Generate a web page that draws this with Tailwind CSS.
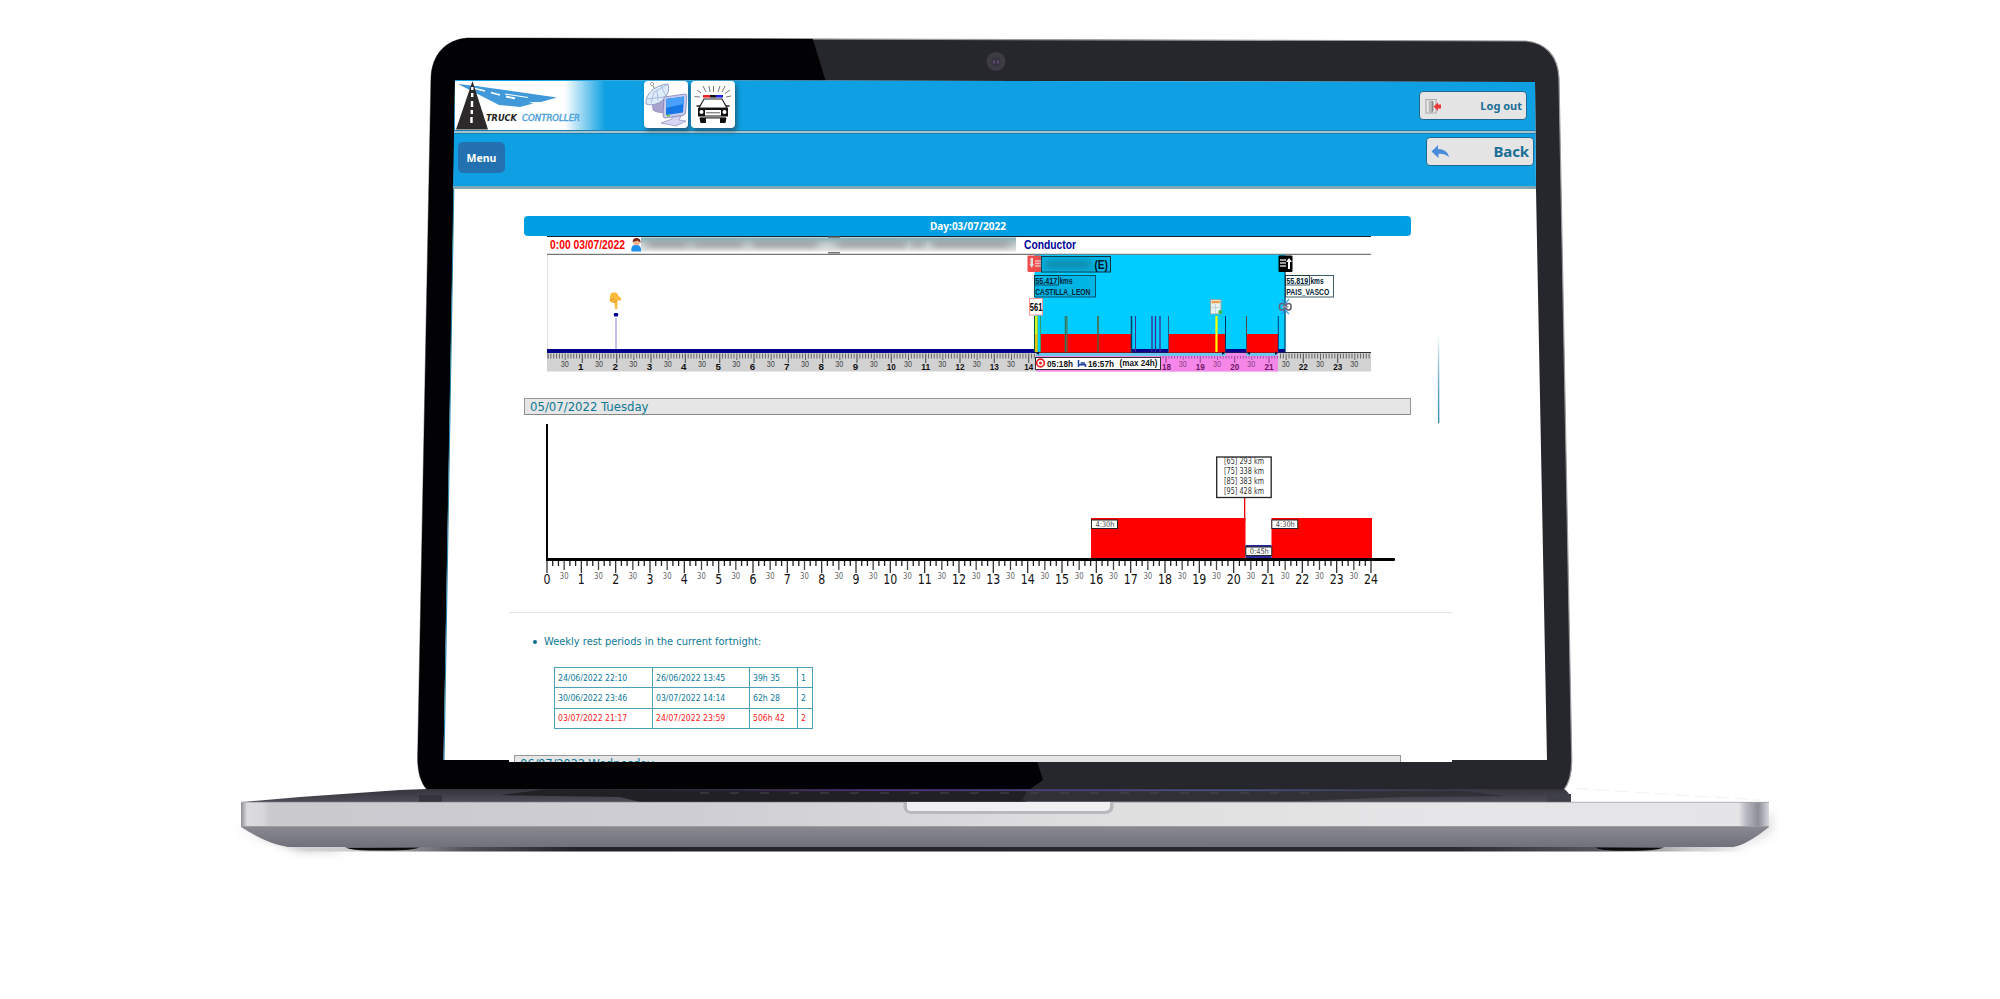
<!DOCTYPE html>
<html lang="en">
<head>
<meta charset="utf-8">
<title>Truck Controller</title>
<script src="https://cdn.jsdelivr.net/npm/@tailwindcss/browser@4"></script>
</head>
<body class="bg-white">
<div class="relative w-[2000px] h-[999px] overflow-hidden bg-white font-['Noto_Sans',sans-serif] text-[#0e7896]">

  <!-- Laptop -->
  <svg class="absolute inset-0" width="2000" height="999" viewBox="0 0 2000 999">
    <defs>
      <linearGradient id="front" x1="0" x2="1"><stop offset="0" stop-color="#8e8e94"/><stop offset=".004" stop-color="#dcdcdf"/><stop offset=".014" stop-color="#d8d8dc"/><stop offset=".019" stop-color="#c9c9ce"/><stop offset=".3" stop-color="#cfced4"/><stop offset=".55" stop-color="#dededf"/><stop offset=".8" stop-color="#e6e6e8"/><stop offset=".98" stop-color="#e5e5e8"/><stop offset=".985" stop-color="#b9b9c2"/><stop offset=".993" stop-color="#8d8d98"/><stop offset="1" stop-color="#d8d8de"/></linearGradient>
      <linearGradient id="under" x1="0" x2="0" y1="0" y2="1"><stop offset="0" stop-color="#888890"/><stop offset="1" stop-color="#71717b"/></linearGradient>
      <linearGradient id="deck" x1="0" x2="0" y1="0" y2="1"><stop offset="0" stop-color="#35343c"/><stop offset="1" stop-color="#4e4d58"/></linearGradient>
      <linearGradient id="shadow" x1="0" x2="1"><stop offset="0" stop-color="#888" stop-opacity="0"/><stop offset=".12" stop-color="#55555c"/><stop offset=".2" stop-color="#222228"/><stop offset=".8" stop-color="#2a2a30"/><stop offset=".9" stop-color="#55555c"/><stop offset="1" stop-color="#888" stop-opacity="0"/></linearGradient>
      <linearGradient id="glint" x1="0" x2="1"><stop offset="0" stop-color="#3c2a5c" stop-opacity="0"/><stop offset=".3" stop-color="#4b2f78"/><stop offset=".7" stop-color="#4a5288"/><stop offset="1" stop-color="#4a5288" stop-opacity="0"/></linearGradient>
      <filter id="soft" x="-20%" y="-50%" width="140%" height="200%"><feGaussianBlur stdDeviation="5"/></filter>
      <clipPath id="lidClip"><path d="M431 78C432 55 445 40 467 38L1526 41C1546 43 1558 56 1559 78L1571.700 758C1572 772 1570 782 1564 789.500H427C420 782 417.500 770 417.700 757Z"/></clipPath>
    </defs>
    <path d="M236 828L300 851H350L300 840Z" fill="#777" opacity=".4" filter="url(#soft)"/>
    <path d="M1772 812L1774 824L1770 835L1735 848H1690Z" fill="#777" opacity=".2" filter="url(#soft)"/>
    <path d="M431 78C432 55 445 40 467 38L1526 41C1546 43 1558 56 1559 78L1571.700 758C1572 772 1570 782 1564 789.500H427C420 782 417.500 770 417.700 757Z" fill="#26272c" stroke="#9a9a9e" stroke-width="1.200"/>
    <g clip-path="url(#lidClip)">
      <path d="M400 30H810L826 82L1037 761L1043 780L1026 792H400Z" fill="#020204"/>
    </g>
    <circle cx="996" cy="61.500" r="9.500" fill="#3d3c45"/><circle cx="996" cy="61.500" r="5" fill="#37333f"/><rect x="993" y="60.500" width="2" height="3" fill="#5c4a7d"/><rect x="997" y="60.500" width="2" height="3" fill="#5c4a7d"/>
    <path d="M455 80L1535 82L1536 190L1547 760H1452V762H509V760H443.500L453.700 190Z" fill="#fff"/>
    <!-- Deck -->
    <path d="M243 802L300 797L400 790L427 789H1564Q1571 793 1571 802Z" fill="url(#deck)"/>
    <path d="M500 795L545 789.500H1026V802H640L620 797Z" fill="#202025"/><path d="M1028 789.500H1450L1505 796L1400 797L1300 801H1022Z" fill="#303036"/>
    <rect x="419" y="795" width="23" height="7" fill="#35343c"/><rect x="1547" y="794" width="24" height="8" fill="#3f3f4a"/>
    <rect x="600" y="789.500" width="900" height="1.600" fill="url(#glint)"/>
    <path d="M700 793H1320" stroke="#4a4852" stroke-width="1" stroke-dasharray="9 21"/>
    <path d="M1575 788.500L1760 800" stroke="#f2f2f3" stroke-width="1" stroke-dasharray="14 6"/>
    <rect x="241" y="802" width="1528" height="25" fill="url(#front)"/>
    <path d="M241 827H1769C1755 838 1742 846 1733 847H288C270 844 255 836 241 827Z" fill="url(#under)"/>
    <path d="M241 826.500H1769" stroke="#9b9ba0"/><path d="M241 802.300H1769" stroke="#a3a3a9" stroke-width=".8"/>
    <path d="M903.500 802V807Q904 814 912 814H1105Q1113 814 1113.500 807V802Z" fill="#b9b9bd"/>
    <path d="M907 802V808Q907.500 811 911 811H1103Q1109.500 811 1110 807V802Z" fill="#f0f0f2"/>
    <rect x="285" y="847" width="1460" height="4.500" fill="url(#shadow)"/>
    <path d="M345 847.500H420Q412 850.500 390 850.500H370Q352 850.500 345 847.500ZM1595 847.500H1664Q1655 850.800 1635 850.800H1620Q1602 850.800 1595 847.500Z" fill="#0b0b0e"/>
  </svg>

  <!-- Screen -->
  <main class="relative ml-[443px] mt-[80px] w-[1104px] h-[682px] overflow-hidden [clip-path:polygon(12px_0,1092px_2px,1093px_110px,1104px_680px,1009px_680px,1009px_682px,66px_682px,66px_680px,0_680px,10px_110px)]">

    <header class="flex h-[51px] items-start bg-[#0ea0e2] border-b border-[#1b80ae] pl-[12px] pr-[20px]">
      <svg width="160" height="50" viewBox="455 80 160 50">
        <defs><linearGradient id="fade" x1="0" x2="1"><stop offset="0" stop-color="#fff"/><stop offset=".73" stop-color="#fff"/><stop offset="1" stop-color="#0ea0e2"/></linearGradient></defs>
        <rect x="455" y="81" width="150" height="49" fill="url(#fade)"/>
        <path d="M458 84L476 86L557 97.500L541 102L529 102L533 103.500L520 107L499 105Z" fill="#4199d9"/>
        <path d="M475 88.500L485 91M491 92.500L500 95M506 96.500L515 98.500" stroke="#fff" stroke-width="1.800"/>
        <path d="M505 94L528 97.500" stroke="#fff" stroke-width="1"/>
        <path d="M472.500 81L456 129.500H488Z" fill="#2b2929"/>
        <path d="M472.300 87V90M472.200 93V97M472 101V107M471.800 110V114M471.500 117V123" stroke="#fff" stroke-width="2.400"/>
        <g font-family="'DejaVu Sans',sans-serif" font-size="9" font-weight="700" font-style="oblique"><text x="486" y="120.500" fill="#222" textLength="31" lengthAdjust="spacingAndGlyphs">TRUCK</text><text x="522" y="120.500" fill="#4a9edb" font-weight="400" stroke="#4a9edb" stroke-width=".4" textLength="58" lengthAdjust="spacingAndGlyphs">CONTROLLER</text></g>
      </svg>
      <div class="ml-[29px] mt-px flex gap-[3px]">
        <div class="h-[47px] w-[44px] rounded-[4px] bg-white shadow-[2px_3px_4px_rgba(40,70,90,.7)]">
          <svg width="44" height="47" viewBox="644 81 44 47">
            <circle cx="652" cy="84" r="1.700" fill="none" stroke="#aaa"/><path d="M653 86L657 93" stroke="#777"/>
            <path d="M652 101L653 110Q658 114 669 112L666 98Z" fill="#a9a4cf" stroke="#8c88b5" stroke-width=".7"/>
            <path d="M646 104C645 94 655 85 668 84C669.500 90 668 94 665 98C660 104 652 106 646 104Z" fill="#dfeafa" stroke="#8296c0" stroke-width=".9"/>
            <path d="M651 103L654 92L668 84M658 101L657 91M647 99L664 97M661 86L666 96" fill="none" stroke="#9ab4dc" stroke-width=".8"/>
            <path d="M664 97L685 94Q687 94 686.800 96L685.500 113Q685 115 683 115.500L665 118Q663 118 663 115Z" fill="#c9cbed" stroke="#7779b4" stroke-width=".7"/>
            <path d="M666 99L684 96.500L683 112.500L666 115Z" fill="#1676e6"/><path d="M666 99L684 96.500L683.500 104L666 108Z" fill="#49a0fa"/>
            <path d="M672 117L681 116L679 120L686 121L676 126L661 123L672 119Z" fill="#d6d4f1" stroke="#8e8cc0" stroke-width=".7"/><path d="M667 115.500H670" stroke="#56c531" stroke-width="1.600"/>
          </svg>
        </div>
        <div class="h-[47px] w-[44px] rounded-[4px] bg-white shadow-[2px_3px_4px_rgba(40,70,90,.7)]">
          <svg width="44" height="47" viewBox="691 81 44 47">
            <path d="M697 90L701 93M694.500 96.500L700 97M703 86L706 92M709 86L710 92M720 86L718 92M713.500 86V92M725 86L722 92M730 90L725 93.500M731 96L726 97" stroke="#666" stroke-width=".9"/>
            <rect x="703" y="95" width="7" height="2.600" fill="#e22"/><rect x="710" y="95" width="6" height="2.600" fill="#111"/><rect x="716" y="95" width="7" height="2.600" fill="#22d"/>
            <path d="M704 99H722L727 108H699Z" fill="#fff" stroke="#222" stroke-width="1.200"/>
            <path d="M696.500 106H700M726 106H729.500" stroke="#222" stroke-width="1.500"/>
            <path d="M698 108H728V116.500H698Z" fill="#111"/><path d="M705 110H721V115.500H705Z" fill="#fff"/><path d="M706 112.800H720" stroke="#333" stroke-width=".8"/>
            <circle cx="701.500" cy="112" r="2" fill="#fff"/><circle cx="724.500" cy="112" r="2" fill="#fff"/>
            <path d="M700 117.800H726" stroke="#333" stroke-width="1.200"/><path d="M699.500 118H706V123H700.500ZM720 118H726.500L725.500 123H720Z" fill="#111"/>
          </svg>
        </div>
      </div>
      <button class="ml-auto mt-[11px] flex h-[29px] w-[108px] items-center justify-between rounded-[4px] border border-[#1c6a91] bg-[#e5e5e6] pl-[5px] pr-[4px] pt-px text-[11px] font-bold text-[#1a6f96]">
        <svg width="17" height="17" viewBox="0 0 17 17"><path d="M1 1.500H11V15H1Z" fill="#eee" stroke="#aaa" stroke-width="1.200"/><path d="M3.500 2.500H6.500V14.500H3.500Z" fill="#bbb"/><path d="M6.500 2.500L8.500 3.500V13L6.500 15Z" fill="#888"/><path d="M16 6.500V10.500H13V13L8.500 8.500L13 4.500V6.500Z" fill="#e93a3a"/></svg>
        <span>Log out</span>
      </button>
    </header>

    <div class="h-[2px] bg-[#a3c3d2]"></div>
    <nav class="flex h-[56px] items-start justify-between border-t border-b-[3px] border-t-[#1b80ae] border-b-[#7fa8b8] bg-[#0ea0e2] pl-[15px] pr-[13px]">
      <button class="mt-[8px] h-[31px] w-[47px] rounded-[5px] bg-[#2371b0] text-[10.5px] font-bold leading-[30px] text-white">Menu</button>
      <button class="mt-[3px] flex h-[29px] w-[108px] items-center justify-between rounded-[4px] border border-[#1c6a91] bg-[#e5e5e6] pl-[4px] pr-[4px] text-[15px] font-bold text-[#1a6f96]">
        <svg width="19" height="16" viewBox="0 0 19 16"><path d="M0.500 7.500L7 1V5C13 5 17 8 18 13C14 10 11 9.500 7.500 10V14Z" fill="#4a8bdc"/></svg>
        <span class="tracking-[-0.1px]">Back</span>
      </button>
    </nav>

    <section class="ml-[81px] mt-[27px] w-[887px]">
      <h2 class="h-[20px] rounded-[4px] bg-[#009fe3] pl-px text-center text-[10px] font-bold leading-[21px] text-white">Day:03/07/2022</h2>
      <svg id="c1" class="ml-[23px] block" width="824" height="136" viewBox="547 236 824 136" font-family="'Liberation Sans',sans-serif"></svg>
      <h3 class="mt-[26px] h-[17px] border border-[#999] border-b-[#888] bg-[#e6e6e6] pl-[5px] font-['DejaVu_Sans_Condensed','DejaVu_Sans',sans-serif] text-[13px] leading-[15px]">05/07/2022 Tuesday</h3>
      <svg id="c2" class="ml-[18px] block" width="869" height="180" viewBox="542 415 869 180" font-family="'DejaVu Sans Condensed','DejaVu Sans',sans-serif"></svg>
    </section>

    <hr class="ml-[66px] mt-[17px] w-[943px] border-[#e2e2e2]">
    <section class="ml-[90px] mt-[21px] font-['DejaVu_Sans_Condensed','DejaVu_Sans',sans-serif]">
      <div class="flex h-[16px] items-center gap-[7px] text-[11px] leading-[16px]"><span class="h-[4px] w-[4px] rounded-full bg-[#0e6e8e]"></span><span class="whitespace-nowrap">Weekly rest periods in the current fortnight:</span></div>
      <table class="ml-[21px] mt-[17px] w-[258px] table-fixed border-collapse text-[8.6px] leading-[10px]">
        <colgroup><col class="w-[98px]"><col class="w-[97px]"><col class="w-[48px]"><col class="w-[15px]"></colgroup>
        <tbody class="[&_td]:h-[20.4px] [&_td]:border [&_td]:border-[#4ba0b8] [&_td]:p-0 [&_td]:pl-[3px] [&_td]:whitespace-nowrap">
          <tr><td>24/06/2022 22:10</td><td>26/06/2022 13:45</td><td>39h 35</td><td>1</td></tr>
          <tr><td>30/06/2022 23:46</td><td>03/07/2022 14:14</td><td>62h 28</td><td>2</td></tr>
          <tr class="text-[#ff2020]"><td>03/07/2022 21:17</td><td>24/07/2022 23:59</td><td>506h 42</td><td>2</td></tr>
        </tbody>
      </table>
    </section>
    <h3 class="ml-[71px] mt-[26px] h-[17px] w-[887px] border border-[#999] bg-[#e6e6e6] pl-[5px] font-['DejaVu_Sans_Condensed','DejaVu_Sans',sans-serif] text-[13px] leading-[15px] tracking-[-0.25px]">06/07/2022 Wednesday</h3>

    <svg class="absolute inset-0" width="1104" height="682" viewBox="443 80 1104 682">
      <defs><linearGradient id="edge" x1="0" x2="0" y1="0" y2="1"><stop offset="0" stop-color="#1a7ea8" stop-opacity="0"/><stop offset="1" stop-color="#1a7ea8"/></linearGradient></defs>
      <path d="M1438 335H1439V423H1438.400Z" fill="url(#edge)" stroke="url(#edge)" stroke-width=".6"/>
      <path d="M453.700 190L444 760" stroke="#2f86a8" stroke-width="1.200"/>
    </svg>
  </main>
</div>

<script>
const H = 34.333, X0 = 547;
const rect = (x, y, w, h, f, extra = '') => `<rect x="${x}" y="${y}" width="${w}" height="${h}" fill="${f}" ${extra}/>`;
const line = (x, y1, y2, c, w = 1) => rect(x - w / 2, y1, w, y2 - y1, c);
const text = (x, y, size, str, len, extra = '') => `<text x="${x}" y="${y}" font-size="${size}" ${len ? `textLength="${len}" lengthAdjust="spacingAndGlyphs"` : ''} ${extra}>${str}</text>`;

// Tachograph strip of the day
let a = rect(547, 236, 824, 1, '#123') +
  text(550, 249.300, 13.500, '0:00 03/07/2022', 75, 'fill="#f00" font-weight="700"') +
  '<path d="M631.500 251.500Q630.500 244 636 245Q641.500 244 641 251.500Z" fill="#1e90ee"/><circle cx="636.500" cy="242" r="3.300" fill="#f5b08c"/><path d="M632.500 242Q633 237.500 637 238Q641 238.500 640.500 243L638 240.500Z" fill="#7b2418"/>' +
  '<defs><linearGradient id="bl" x1="0" x2="0" y1="0" y2="1"><stop offset="0" stop-color="#7fb0b8"/><stop offset=".4" stop-color="#bcc6c9"/><stop offset="1" stop-color="#e8e8e8"/></linearGradient><filter id="b3" x="-10%" y="-50%" width="120%" height="200%"><feGaussianBlur stdDeviation="4 2"/></filter></defs>' +
  rect(641, 237.500, 375, 14, 'url(#bl)') +
  [[648, 40], [692, 52], [752, 65], [837, 70], [912, 12], [932, 78]].map(b => rect(b[0], 240.500, b[1], 8, '#777', 'opacity=".4" filter="url(#b3)"')).join('') +
  rect(828, 236.500, 12, 1.500, '#777') + rect(828, 252, 12, 1.500, '#777') +
  text(1024, 249.300, 13.500, 'Conductor', 52, 'fill="#00009b" font-weight="700"') +
  rect(547, 253.800, 824, 1, '#555') + rect(547, 255, .6, 98, '#ccc') + rect(1034.500, 254.800, 251, 98, '#00ccff');
a += rect(547, 353, 824, 18.500, '#d2d2d2') + rect(1036, 353, 242, 18.500, '#f587e8') + rect(1036, 353, 190, 3, '#6cc6ee') + rect(1246, 353, 31, 3, '#6cc6ee') + rect(1034.500, 352, 337, 1, '#333');
for (let i = 0; i < 144 * 2; i++) {
  const x = X0 + 1 + i * H / 12;
  if (x > 1370 || (x > 1035 && x < 1160)) continue;
  const hour = i % 12 === 0, half = i % 12 === 6;
  a += line(x, x > 1160 && x < 1278 ? 356 : 353.500, hour && i ? 363 : half ? 360 : 358.500, x > 1160 && x < 1278 ? '#a050a0' : '#666', hour ? 1.300 : 1);
}
for (let h = 0; h < 24; h++) {
  const p = h >= 18 && h < 22;
  if (h && (h < 15 || h > 17)) a += text(X0 + h * H - (h === 18 ? -1.500 : h > 9 ? -1 : 0.500), 369.500, 9.800, h, h > 9 ? 9 : 0, `text-anchor="middle" font-weight="700" fill="${p ? '#6d1466' : '#111'}"`);
  if (h < 14 || h > 17) a += text(X0 + (h + .5) * H + 0.500, 367.300, 9, '30', 8, `text-anchor="middle" fill="${h >= 18 && h < 21 ? '#8c3f86' : '#444'}"`);
}
a += rect(547, 349, 488, 4, '#00008b') + rect(1131, 349, 37, 3.500, '#00008b') + rect(1225, 349, 22, 3.500, '#00008b') + rect(1278, 349, 7, 3.500, '#00008b');
a += rect(1040, 334, 91.500, 18.500, '#f00') + rect(1168, 334, 57.500, 18.500, '#f00') + rect(1246.500, 334, 31.500, 18.500, '#f00');
[[1034.500, '#063'], [1037.500, '#9c3'], [1040.500, '#396'], [1065.500, '#2a7a60', 1.500], [1067, '#5a6a40'], [1098, '#5a5a30', 1.500], [1131.500, '#003a6a', 1.500], [1135.500, '#4a2a8a'], [1152, '#3a2a8a', 1.300], [1155.500, '#3a2a8a', 1.300], [1160, '#3a2a8a', 1.300], [1168.500, '#357'], [1225.500, '#036'], [1246.500, '#544'], [1278.300, '#003a7a']].forEach(l => a += line(l[0], 316, 352, l[1], l[2] || 1));
a += line(1036, 316, 352, '#ff0', 1.600) + line(1036, 334, 352, '#f80', 1) + line(1216.500, 316, 352, '#ff0', 2.200) + line(1285, 272, 353, '#024', 1);
// Hand marker
a += line(616, 318, 349, '#a8a0e0', 1.300) + rect(613.800, 313, 4.400, 3.600, '#00008b', 'rx="1"') +
  '<path d="M610.500 294Q611 292.500 613 292.500H616Q618 293.500 618.500 296L621.500 298.500L620 301L617.500 300L617.300 308.500Q616.300 310 615 308.500L614.600 303Q610.500 303.500 609.500 300Z" fill="#f9b93a"/><path d="M610 299Q612 301 614 299M614 303Q614.500 300.500 617 300.500" stroke="#d8891c" stroke-width=".7" fill="none"/>';
// Start and end cards
a += rect(1027.500, 255.500, 13.500, 16.500, '#ef4b4b', 'rx="1"') + '<path d="M1029.500 264H1030.500V258H1033V264H1034L1031.700 268Z" fill="#ddd"/><path d="M1035 261H1041M1035 263.500H1041M1035 266H1041" stroke="#ffb5b5" stroke-width="1.500"/>' +
  rect(1041.500, 256.500, 69, 15.500, '#00b4e4', 'stroke="#134"') + rect(1044, 259, 47, 11, '#0893b8', 'filter="url(#b3)"') + text(1094.500, 268.800, 12.500, '(E)', 13.500, 'font-weight="700" fill="#012"');
const place = (x, w, bg, km, name, nl) => rect(x, 275.500, w, 21.500, bg, 'stroke="#134" stroke-width=".8"') + rect(x, 275.500, 24, 9.500, 'none', 'stroke="#134" stroke-width=".8"') + text(x + .8, 284, 9.200, km, 22) + text(x + 25, 284, 9.200, 'kms', 13) + text(x + .8, 295, 9.600, name, nl);
a += '<g font-weight="700" fill="#023">' + place(1034.500, 61, '#00b4e4', '55.417', 'CASTILLA_LEON', 55) + place(1285.500, 48, '#fff', '55.819', 'PAIS_VASCO', 43) + '</g>';
a += rect(1029.500, 298.500, 13, 16.500, '#fff', 'stroke="#f99"') + text(1029.800, 311, 11.500, '561', 12.500, 'font-weight="700"');
a += rect(1278.500, 255.500, 14, 16.500, '#000', 'rx="1"') + '<path d="M1280 260H1286M1280 263H1286M1280 266H1286" stroke="#ccc" stroke-width="1.300"/><path d="M1289 258L1292 262H1290V269H1288V262H1286Z" fill="#fff"/>';
a += rect(1210.500, 299.500, 10.500, 14.500, '#e6f1f3', 'stroke="#8aa"') + rect(1211.500, 300.800, 8.500, 2.400, '#f3a24a') + '<path d="M1211 307.500H1221M1215.500 304V314" stroke="#b5c8cc" stroke-width=".7"/><circle cx="1220.300" cy="312" r="2" fill="#41b648"/>';
a += '<path d="M1281.500 299L1284 303M1289 299L1286 303M1281.500 314L1284 311M1289 314L1286 311M1285 303V311" stroke="#2a9cf0" stroke-width="1.200"/><g fill="none" stroke="#667" stroke-width="1.700"><rect x="1279.500" y="303.500" width="5" height="6.500" rx="2.500"/><rect x="1286" y="303.500" width="5" height="6.500" rx="2.500"/></g><path d="M1282 306.800H1288.500" stroke="#99a" stroke-width="1.500"/>';
a += '<path d="M1036 353L1039 351.500V355ZM1225 353L1222 351.500V355ZM1247 353L1250 351.500V355ZM1278 353L1275 351.500V355Z" fill="#013"/>';
a += rect(1035.500, 357.500, 125, 12, '#fff', 'stroke="#333"') + '<circle cx="1040.500" cy="363" r="3.900" fill="#fff" stroke="#e22" stroke-width="1.700"/><circle cx="1040.500" cy="363" r="1.500" fill="#e22"/>' +
  '<path d="M1078.500 360V367M1078.500 364.700H1085.500V367M1080.500 363H1085" stroke="#1d3f9c" stroke-width="1.500" fill="none"/>' +
  '<g font-weight="700" fill="#111">' + text(1047, 367, 9.800, '05:18h', 26) + text(1088, 367, 9.800, '16:57h', 26) + text(1119.500, 366, 9.800, '(max 24h)', 38) + '</g>';
document.getElementById('c1').innerHTML = a;

// Driving forecast
let b = rect(1091, 518, 154.500, 41, '#f00') + rect(1271.500, 518, 100.500, 41, '#f00') + rect(1244, 497, 1.300, 25, '#e00') + rect(1245.500, 545, 26, 13, '#2a2a9c');
const tag = (x, y, s) => rect(x, y, 26, 8.500, '#fff', 'stroke="#222"') + text(x + 4, y + 6.900, 7.800, s, 19, 'fill="#444"');
b += tag(1091.500, 520, '4:30h') + tag(1271.800, 520, '4:30h') + tag(1245.800, 547, '0:45h');
b += rect(1216.700, 457, 54.500, 40.500, '#fff', 'stroke="#222" stroke-width="1.300"');
['[65] 293 km', '[75] 338 km', '[85] 383 km', '[95] 428 km'].forEach((s, i) => b += text(1224, 464.300 + i * 10, 8, s, 40, 'fill="#333"'));
for (let i = 0; i <= 144; i++) {
  const x = 547 + i * H / 6, hour = i % 6 === 0, half = i % 6 === 3;
  b += line(x, 560, hour ? 573 : half ? 570 : 566, hour ? '#333' : half ? '#444' : '#222', 1.300);
  if (hour) b += text(x, 583.800, 13.500, i / 6, i > 54 ? 14 : 7, 'text-anchor="middle" fill="#111"');
  if (half) b += text(x, 578.500, 8.500, '30', 8.800, 'text-anchor="middle" fill="#666"');
}
b += rect(546, 424, 2, 137, '#000') + rect(546, 558, 849, 3, '#000', 'rx="1"');
document.getElementById('c2').innerHTML = b;
</script>
</body>
</html>
